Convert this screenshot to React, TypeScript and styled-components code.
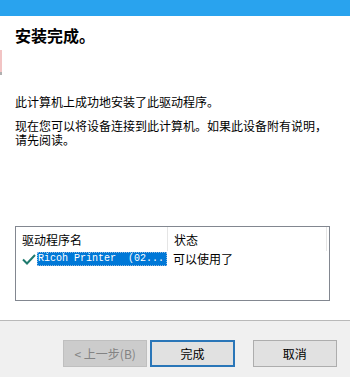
import React from "react";
import styled, { createGlobalStyle } from "styled-components";

const GlobalStyle = createGlobalStyle`
  html, body {
    margin: 0;
    padding: 0;
    background: #f0f0f0;
  }
  body {
    font-family: "Noto Sans CJK SC", "Noto Sans", sans-serif;
    color: #000;
  }
`;

interface iRow {
  name: string;
  status: string;
}

const rows: iRow[] = [{ name: "Ricoh Printer  (02...", status: "可以使用了" }];

const App: React.FC = () => {
  return (
    <Window>
      <GlobalStyle />
      <TitleBar />
      <EdgeMark />
      <Content>
        <Heading>安装完成。</Heading>
        <Para>此计算机上成功地安装了此驱动程序。</Para>
        <Para>
          现在您可以将设备连接到此计算机。如果此设备附有说明，
          <br />
          请先阅读。
        </Para>
        <ListBox>
          <HeaderRow>
            <HeadCell width={152}>驱动程序名</HeadCell>
            <HeadCell width={159}>状态</HeadCell>
          </HeaderRow>
          {rows.map((r) => (
            <Row key={r.name}>
              <CheckCell>
                <svg width="14" height="11" viewBox="0 0 14 11">
                  <path
                    d="M1 5.5 L5 9.5 L13 1"
                    fill="none"
                    stroke="#1f7a6e"
                    strokeWidth="2"
                  />
                </svg>
              </CheckCell>
              <NameCell>{r.name}</NameCell>
              <StatusCell>{r.status}</StatusCell>
            </Row>
          ))}
        </ListBox>
      </Content>
      <Footer>
        <Button disabled>&lt; 上一步(B)</Button>
        <Button $focused>完成</Button>
        <Spacer />
        <Button>取消</Button>
      </Footer>
    </Window>
  );
};
export default App;

const Window = styled.div`
  width: 350px;
  height: 377px;
  display: flex;
  flex-direction: column;
  position: relative;
  overflow: hidden;
`;
const TitleBar = styled.div`
  height: 16px;
  background-color: #29a3ee;
`;
const EdgeMark = styled.div`
  position: absolute;
  left: 0;
  top: 50px;
  width: 2px;
  height: 22px;
  background: #f2c4c4;
  border-bottom: 3px solid #b0b0b0;
`;
const Content = styled.div`
  flex: 1;
  background: #fff;
  padding: 9px 20px 19px 15px;
  display: flex;
  flex-direction: column;
`;
const Heading = styled.div`
  font-size: 16px;
  line-height: 20px;
  font-weight: bold;
  margin-bottom: 50px;
`;
const Para = styled.div`
  font-size: 12px;
  line-height: 14px;
  margin-bottom: 10px;
  white-space: nowrap;
`;
const ListBox = styled.div`
  margin-top: auto;
  height: 73px;
  border: 1px solid #828790;
  background: #fff;
`;
const HeaderRow = styled.div`
  display: flex;
  height: 24px;
`;
const HeadCell = styled.div<{ width: number }>`
  width: ${(p) => p.width}px;
  box-sizing: border-box;
  padding: 5px 0 0 6px;
  font-size: 12px;
  line-height: 16px;
  border-right: 1px solid #e5e5e5;
`;
const Row = styled.div`
  display: flex;
  align-items: center;
  height: 14px;
  margin-top: 1px;
`;
const CheckCell = styled.div`
  width: 21px;
  display: flex;
  justify-content: flex-end;
  padding-right: 1px;
  box-sizing: border-box;
`;
const NameCell = styled.div`
  width: 130px;
  height: 14px;
  box-sizing: border-box;
  background: #0078d7;
  color: #fff;
  outline: 1px dotted #8fb8e0;
  outline-offset: -1px;
  font-family: "Liberation Mono", "DejaVu Sans Mono", monospace;
  font-size: 10px;
  line-height: 14px;
  padding-left: 1px;
  white-space: pre;
  overflow: hidden;
`;
const StatusCell = styled.div`
  padding-left: 6px;
  font-size: 12px;
  line-height: 14px;
`;
const Footer = styled.div`
  height: 57px;
  box-sizing: border-box;
  border-top: 1px solid #b9b9b9;
  background: #f0f0f0;
  display: flex;
  align-items: flex-start;
  padding: 19px 13px 0 63px;
  gap: 3px;
`;
const Spacer = styled.div`
  width: 12px;
`;
const Button = styled.button<{ $focused?: boolean }>`
  width: 86px;
  height: 27px;
  box-sizing: border-box;
  font-family: "Noto Sans CJK SC", "Noto Sans", sans-serif;
  font-size: 12px;
  color: #000;
  background: #e1e1e1;
  border: ${(p) => (p.$focused ? "2px solid #2a76b8" : "1px solid #adadad")};
  padding: 0;
  &:disabled {
    background: #cccccc;
    border-color: #bfbfbf;
    color: #838383;
  }
`;
